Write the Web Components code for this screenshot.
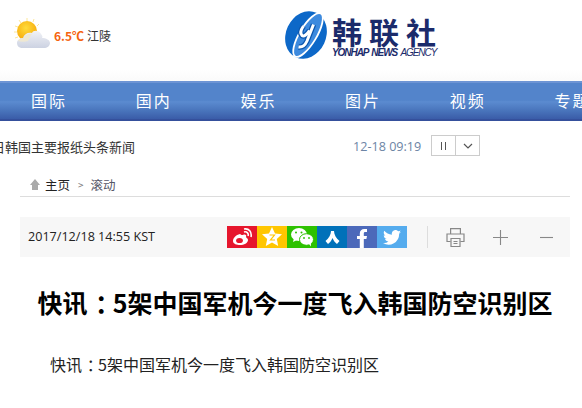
<!DOCTYPE html>
<html lang="zh">
<head>
<meta charset="utf-8">
<title>快讯</title>
<style>
html,body{margin:0;padding:0;background:#fff;overflow:hidden;}
body{width:582px;height:408px;font-family:"Noto Sans CJK SC","Liberation Sans",sans-serif;color:#222;}
.c{padding-left:.3em;letter-spacing:-.3em;}
</style>
</head>
<body>
<yh-header></yh-header>
<yh-nav>
  <a>国际</a><a>国内</a><a>娱乐</a><a>图片</a><a>视频</a><a>专题</a>
</yh-nav>
<yh-ticker time="12-18 09:19">18日韩国主要报纸头条新闻</yh-ticker>
<yh-crumb></yh-crumb>
<yh-toolbar date="2017/12/18 14:55 KST"></yh-toolbar>
<yh-article>
  <span slot="title">快讯<span class="c">：</span>5架中国军机今一度飞入韩国防空识别区</span>
  快讯<span class="c">：</span>5架中国军机今一度飞入韩国防空识别区
</yh-article>

<script>
const FONT = '"Noto Sans CJK SC","Liberation Sans",sans-serif';

class Base extends HTMLElement {
  constructor(){ super(); this.attachShadow({mode:'open'}); }
  connectedCallback(){ this.shadowRoot.innerHTML = this.render(); }
}

customElements.define('yh-header', class extends Base {
  render(){ return `
<style>
:host{display:flex;height:81px;box-sizing:border-box;font-family:${FONT};background:linear-gradient(#fff 70px,#fafafa);}
.weather{display:flex;align-items:flex-start;width:284px;padding:18px 0 0 14px;box-sizing:border-box;font-size:12px;line-height:18px;}
.weather svg{flex:none;margin-right:3px;}
.temp{color:#f5640f;font-weight:700;margin:9px 3px 0 0;}
.city{color:#333;margin-top:9px;}
.logo{display:flex;gap:4px;padding-top:10px;}
.brand{display:flex;flex-direction:column;width:110px;padding-top:4px;}
.cn{font-size:30px;line-height:34px;height:34px;font-weight:700;color:#1b2b6b;letter-spacing:7px;white-space:nowrap;}
.en{font:italic 700 10px/10px "Liberation Sans",sans-serif;color:#1b2b6b;white-space:nowrap;letter-spacing:-1.05px;word-spacing:1.5px;}
.en span{font-weight:400;}
</style>
<div class="weather">
  <svg width="37" height="32" viewBox="0 0 37 32">
    <defs>
      <radialGradient id="s" cx=".45" cy=".35" r=".7"><stop offset="0" stop-color="#ffdc3c"/><stop offset="1" stop-color="#f6a404"/></radialGradient>
      <linearGradient id="c" x1="0" y1="0" x2="0" y2="1"><stop offset="0" stop-color="#f1f2f6"/><stop offset="1" stop-color="#ccd2e2"/></linearGradient>
    </defs>
    <g stroke="#fde79a" stroke-width="1">
      <path d="M13 0v3M5 2l2 3M20 1l-1 3M1 8l3 1M0 14h3M1 20l3-1M25 6l-2 2"/>
    </g>
    <circle cx="13" cy="13" r="10" fill="url(#s)"/>
    <path d="M9 30c-4 0-6-2-6-5 0-3 3-5 6-5 1-4 5-6 9-5 1-3 7-3 9 1 1 1 2 3 1 4 4 0 8 2 8 5 0 3-3 5-6 5z" fill="url(#c)"/>
    <path d="M4 23c1-2 3-3 6-3 1-3 5-5 8-4-2 2-3 5-4 7-3 1-7 1-10 0z" fill="#efe8d2"/>
  </svg>
  <span class="temp">6.5℃</span><span class="city">江陵</span>
</div>
<div class="logo">
  <svg width="44" height="52" viewBox="0 0 44 52">
    <ellipse cx="22" cy="25" rx="20" ry="24.500" transform="rotate(25 22 25)" fill="#0d68c8"/>
    <ellipse cx="24" cy="25" rx="8.500" ry="25" transform="rotate(31 24 25)" fill="#3d8ade" stroke="#fff" stroke-width="1.800"/>
    <path d="M19.500 16c-2.500 3.500-3.500 7.500-1.500 9.500 2 1.500 5-1 7.500-5M29.500 14.500L23 31c-2 4.500-5 6.500-8.500 6" fill="none" stroke="#0b55ad" stroke-width="5.500"/>
    <path d="M19.500 16c-2.500 3.500-3.500 7.500-1.500 9.500 2 1.500 5-1 7.500-5M29.500 14.500L23 31c-2 4.500-5 6.500-8.500 6" fill="none" stroke="#fff" stroke-width="3"/>
  </svg>
  <div class="brand">
    <div class="cn">韩联社</div>
    <div class="en">YONHAP NEWS <span>AGENCY</span></div>
  </div>
</div>`; }
});

customElements.define('yh-nav', class extends Base {
  render(){ return `
<style>
:host{display:flex;height:40px;box-sizing:border-box;gap:68.7px;padding-left:31px;overflow:hidden;font-family:${FONT};
  align-items:center;
  border-top:2px solid #6d94d4;border-bottom:2px solid #35509c;
  background:linear-gradient(#5384cb 0,#5384cb 48%,#5b8bd0 52%,#4a76bd 75%,#3a5ca8 100%);}
::slotted(a){color:#fff;font-size:16px;letter-spacing:2px;white-space:nowrap;flex:none;line-height:20px;margin-top:-3px;}
</style>
<slot></slot>`; }
});

customElements.define('yh-ticker', class extends Base {
  render(){ return `
<style>
:host{display:flex;align-items:center;height:50px;font-family:${FONT};overflow:hidden;}
.txt{width:353px;flex:none;overflow:hidden;font-size:13px;color:#333;white-space:nowrap;direction:rtl;box-sizing:border-box;padding-right:218px;}
.time{width:78px;flex:none;font-size:12.600px;color:#6d85a5;font-family:"Open Sans","Liberation Sans",sans-serif;margin-top:1px;}
.btns{display:flex;border:1px solid #ccc;height:19px;width:47px;margin-top:-1px;}
.btns span{flex:1;display:flex;align-items:center;justify-content:center;}
.btns span+span{border-left:1px solid #ccc;}
</style>
<div class="txt"><bdi><slot></slot></bdi></div>
<div class="time">${this.getAttribute('time')}</div>
<div class="btns">
  <span><svg width="7" height="8"><path d="M1.500 0v8M5.500 0v8" stroke="#555"/></svg></span>
  <span><svg width="10" height="6"><path d="M1 1l4 4 4-4" fill="none" stroke="#555" stroke-width="1.200"/></svg></span>
</div>`; }
});

customElements.define('yh-crumb', class extends Base {
  render(){ return `
<style>
:host{display:flex;align-items:center;gap:5px;margin:0 12px 0 20px;height:26px;box-sizing:border-box;padding:2px 0 0 10px;border-bottom:1px solid #ddd;font-family:${FONT};font-size:12.500px;color:#222;}
.sep{color:#777;font-size:10px;margin:0 2px 0 3px;}
.now{color:#556;}
</style>
<svg width="10" height="11" viewBox="0 0 10 11"><path d="M5 0l5 6H8v5H2V6H0z" fill="#aaa"/></svg>
<span>主页</span><span class="sep">&gt;</span><span class="now">滚动</span>`; }
});

customElements.define('yh-share', class extends Base {
  render(){ return `
<style>
:host{display:flex;}
span{width:30px;height:22px;display:flex;align-items:center;justify-content:center;}
</style>
<span style="background:#e6162d"><svg width="22" height="18" viewBox="0 0 22 18">
  <path d="M9 6c-4 1-7 4-7 7 0 3 4 4 7 4 4 0 8-2 8-5 0-2-2-2-2-3 1-2-1-3-3-2-1 0-2 0-3-1z" fill="#fff"/>
  <ellipse cx="8.500" cy="12.500" rx="3.400" ry="2.600" fill="#e6162d"/>
  <path d="M13 4c3-1 5 2 4 4M13 1c5-1 8 3 7 8" fill="none" stroke="#fff" stroke-width="1.600"/>
</svg></span>
<span style="background:#ffc600"><svg width="20" height="20" viewBox="0 0 20 20">
  <path d="M10 0l3 6.500 7 .8-5.200 4.700L16.200 19 10 15.500 3.800 19l1.400-7L0 7.300l7-.8z" fill="#fff"/>
  <path d="M7.500 8h5l-4 5h4.500" fill="none" stroke="#ffc600" stroke-width="1.200"/>
</svg></span>
<span style="background:#2dc100"><svg width="24" height="20" viewBox="0 0 24 20">
  <ellipse cx="9" cy="7.500" rx="8" ry="6.500" fill="#fff"/><path d="M4 11l-1 4 4-2z" fill="#fff"/>
  <circle cx="6" cy="5.500" r="1" fill="#2dc100"/><circle cx="11.500" cy="5.500" r="1" fill="#2dc100"/>
  <ellipse cx="16.500" cy="12.500" rx="7" ry="5.800" fill="#fff" stroke="#2dc100"/><path d="M19 17l2 2.500-.2-4z" fill="#fff"/>
  <circle cx="14" cy="11" r=".9" fill="#2dc100"/><circle cx="19" cy="11" r=".9" fill="#2dc100"/>
</svg></span>
<span style="background:#0071b9"><svg width="15" height="13" viewBox="0 0 15 13">
  <path d="M6 0h3c0 3.500 2 7 5.500 10L12 13C10 11.500 8.500 9.500 7.500 7 6.500 9.500 5 11.500 3 13L.5 10C4 7 6 3.500 6 0z" fill="#fff"/>
</svg></span>
<span style="background:#4c69ba"><svg width="10" height="19" viewBox="0 0 10 19" style="margin-top:3px">
  <path d="M2.800 19V10H0V7h2.800V4.500C2.800 1.500 4.700 0 7.200 0H10v3H8.300C7.100 3 6.800 3.700 6.800 4.600V7H10l-.6 3H6.800v9z" fill="#fff"/>
</svg></span>
<span style="background:#55acee"><svg width="18" height="15" viewBox="0 0 24 20">
  <path d="M24 2.400c-.9.400-1.800.7-2.800.8 1-.6 1.800-1.600 2.200-2.700-1 .6-2 1-3.100 1.200A4.900 4.900 0 0 0 11.900 6.200C7.800 6 4.200 4 1.700.9c-1.300 2.200-.7 5.100 1.500 6.600-.8 0-1.600-.2-2.200-.6 0 2.400 1.700 4.500 3.900 5-.7.200-1.500.2-2.200.1.600 2 2.400 3.400 4.600 3.400A9.900 9.900 0 0 1 0 17.400 14 14 0 0 0 21.500 5c1-.7 1.800-1.600 2.500-2.600z" fill="#fff"/>
</svg></span>`; }
});

customElements.define('yh-toolbar', class extends Base {
  render(){ return `
<style>
:host{display:flex;align-items:center;height:40px;margin:20px 12px 0 20px;padding-left:8px;background:#f7f7f7;font-family:${FONT};}
.date{width:199px;flex:none;font-size:12.600px;color:#222;font-family:"Open Sans","Liberation Sans",sans-serif;white-space:nowrap;margin-top:-2px;}
.div{width:1px;height:22px;background:#ddd;margin:0 18px 0 20px;flex:none;}
.tool{display:flex;align-items:center;}
</style>
<div class="date">${this.getAttribute('date')}</div>
<yh-share></yh-share>
<div class="div"></div>
<div class="tool">
  <svg width="19" height="19" viewBox="0 0 19 19" fill="none" stroke="#888" stroke-width="1.200">
    <path d="M4.600 6V.6h9.800V6M4.600 13.500H1V6h17v7.500h-3.600"/>
    <path d="M5 10.500h9v8H5zM7.500 13.500h4M7.500 15.500h4"/>
  </svg>
  <svg style="margin-left:28px" width="15" height="15" viewBox="0 0 15 15"><path d="M0 7.500h15M7.500 0v15" stroke="#888" stroke-width="1.100"/></svg>
  <svg style="margin-left:32px" width="13" height="15" viewBox="0 0 13 15"><path d="M0 7.500h13" stroke="#888" stroke-width="1.100"/></svg>
</div>`; }
});

customElements.define('yh-article', class extends Base {
  render(){ return `
<style>
:host{display:block;font-family:${FONT};color:#111;}
h1{margin:28px 0 0;font-size:25px;line-height:34px;font-weight:700;text-align:center;width:590px;white-space:nowrap;color:#000;}
p{margin:33px 0 0 50px;font-size:16px;line-height:24px;color:#222;white-space:nowrap;}
</style>
<h1><slot name="title"></slot></h1>
<p><slot></slot></p>`; }
});
</script>
</body>
</html>
